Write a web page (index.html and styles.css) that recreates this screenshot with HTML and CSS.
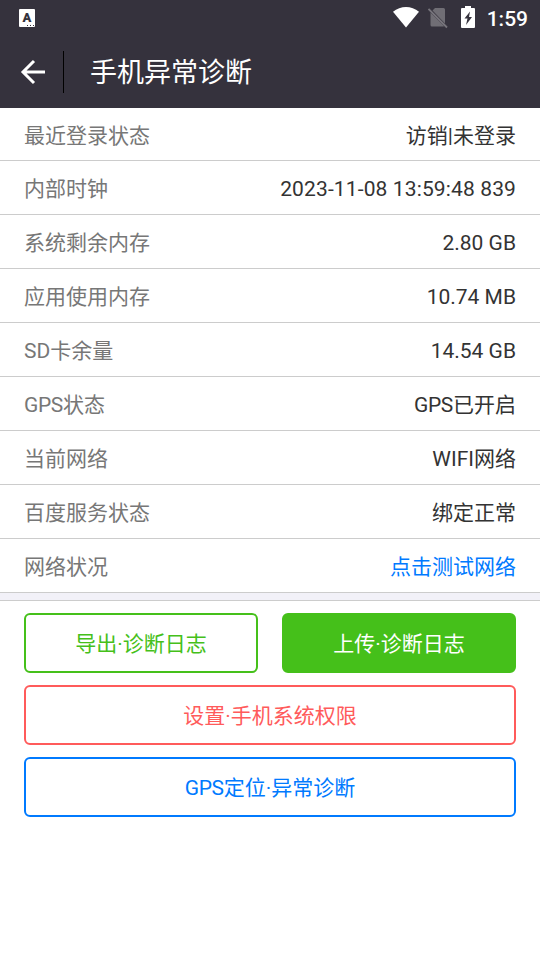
FILE: index.html
```html
<!DOCTYPE html>
<html lang="zh-CN">
<head>
<meta charset="utf-8">
<title>手机异常诊断</title>
<link rel="stylesheet" href="styles.css">
</head>
<body>
<header class="header">
  <div class="status">
    <span class="app-icon">A<i class="dots"></i></span>
    <div class="status-right">
      <svg class="wifi" width="26" height="21" viewBox="0 0 26 21"><path d="M0 4.800C7.500-1.500 18.500-1.500 26 4.800L13 20.500z" fill="#fff"/></svg>
      <svg class="sim" width="20" height="22" viewBox="0 0 20 22"><path d="M7 1h8.500q1.500 0 1.500 1.500v14L4.500 3.500zM2.500 5.500 16 19q-.5.500-1 .5H4q-1.500 0-1.500-1.500z" fill="#706e75"/><path d="M.5 2l18.500 18.500" stroke="#77757c" stroke-width="1.800"/></svg>
      <svg class="battery" width="14" height="22" viewBox="0 0 14 22"><path d="M4 0h6v2h3q1 0 1 1v18q0 1-1 1H1q-1 0-1-1V3q0-1 1-1h3z" fill="#fff"/><path d="M9 5.500 3.500 12.500h3L5 19l6-8H8z" fill="#35323d"/></svg>
      <span class="clock">1:59</span>
    </div>
  </div>
  <div class="toolbar">
    <svg class="back" width="26" height="26" viewBox="0 0 26 26"><path d="M25 13H3M14 2 3 13l11 11" fill="none" stroke="#fff" stroke-width="3"/></svg>
    <span class="divider"></span>
    <h1>手机异常诊断</h1>
  </div>
</header>
<main>
  <dl class="list">
    <div class="row"><dt>最近登录状态</dt><dd>访销|未登录</dd></div>
    <div class="row"><dt>内部时钟</dt><dd class="value">2023-11-08 13:59:48 839</dd></div>
    <div class="row"><dt>系统剩余内存</dt><dd>2.80 GB</dd></div>
    <div class="row"><dt>应用使用内存</dt><dd>10.74 MB</dd></div>
    <div class="row"><dt>SD卡余量</dt><dd>14.54 GB</dd></div>
    <div class="row"><dt><span class="tight">GPS</span>状态</dt><dd><span class="tight">GPS</span>已开启</dd></div>
    <div class="row"><dt>当前网络</dt><dd>WIFI网络</dd></div>
    <div class="row"><dt>百度服务状态</dt><dd>绑定正常</dd></div>
    <div class="row"><dt>网络状况</dt><dd class="link">点击测试网络</dd></div>
  </dl>
  <div class="gap"></div>
  <div class="actions">
    <button class="btn green">导出·诊断日志</button>
    <button class="btn solid">上传·诊断日志</button>
    <button class="btn red wide">设置·手机系统权限</button>
    <button class="btn blue wide"><span class="tight">GPS</span>定位·异常诊断</button>
  </div>
</main>
</body>
</html>
```

FILE: styles.css
```css
* { box-sizing: border-box; }
body { margin: 0; background: #fff; font-family: Roboto, "Noto Sans CJK SC", sans-serif; font-size: 21px; color: #333; }
.header { height: 108px; background: #35323d; color: #fff; }
.status { height: 36px; padding: 0 12px 0 19px; display: flex; justify-content: space-between; align-items: center; }
.app-icon { position: relative; width: 16px; height: 18px; border-radius: 1px; background: #fff; color: #35323d; font-size: 13px; font-weight: 900; line-height: 17px; text-align: center; }
.dots { position: absolute; right: 1px; bottom: 1px; width: 7px; height: 1px; background: repeating-linear-gradient(90deg, #35323d 0 1px, #fff 1px 3px); }
.status-right { display: flex; align-items: center; }
.wifi { margin-bottom: 1px; }
.sim { margin-left: 9px; }
.battery { margin: 0 0 2px 13px; }
.clock { margin-left: 12px; font-weight: 500; line-height: 36px; padding-top: 1px; }
.toolbar { height: 72px; display: flex; align-items: center; padding-left: 20px; }
.divider { width: 1px; height: 42px; margin-left: 17px; background: #000; }
h1 { margin: 0 0 0 26px; padding-top: 2px; font-size: 27px; font-weight: 400; line-height: 40px; }
.list { margin: 0; }
.row { height: 54px; padding: 2px 24px 0; display: flex; align-items: center; justify-content: space-between; border-bottom: 1px solid #ccc; line-height: 32px; }
.row:first-child { height: 53px; padding-top: 4px; }
dt { color: #777; }
dd { margin: 0; }
.value { letter-spacing: .13px; }
.tight { letter-spacing: -.35px; }
.link { color: #007aff; }
.gap { height: 8px; background: #f2f1f8; border-bottom: 1px solid #ccc; }
.actions { display: grid; grid-template-columns: 1fr 1fr; gap: 12px 24px; padding: 12px 24px; }
.btn { height: 60px; padding: 0 0 2px; border: 2px solid; border-radius: 6px; background: #fff; font: inherit; }
.wide { grid-column: span 2; }
.green { color: #45c01a; }
.solid { color: #fff; background: #45c01a; border-color: #45c01a; }
.red { color: #ff5b5b; }
.blue { color: #007aff; }
```
